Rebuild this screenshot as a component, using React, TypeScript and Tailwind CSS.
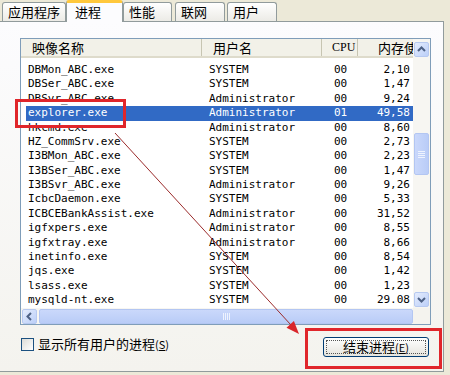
import React from "react";

const rows: [string, string, string, string][] = [
  ["DBMon_ABC.exe", "SYSTEM", "00", "2,10"],
  ["DBSer_ABC.exe", "SYSTEM", "00", "1,47"],
  ["DBSvr_ABC.exe", "Administrator", "00", "9,24"],
  ["explorer.exe", "Administrator", "01", "49,58"],
  ["hkcmd.exe", "Administrator", "00", "8,60"],
  ["HZ_CommSrv.exe", "SYSTEM", "00", "2,73"],
  ["I3BMon_ABC.exe", "SYSTEM", "00", "2,23"],
  ["I3BSer_ABC.exe", "SYSTEM", "00", "1,47"],
  ["I3BSvr_ABC.exe", "Administrator", "00", "9,26"],
  ["IcbcDaemon.exe", "SYSTEM", "00", "5,33"],
  ["ICBCEBankAssist.exe", "Administrator", "00", "31,52"],
  ["igfxpers.exe", "Administrator", "00", "8,55"],
  ["igfxtray.exe", "Administrator", "00", "8,66"],
  ["inetinfo.exe", "SYSTEM", "00", "8,54"],
  ["jqs.exe", "SYSTEM", "00", "1,42"],
  ["lsass.exe", "SYSTEM", "00", "1,23"],
  ["mysqld-nt.exe", "SYSTEM", "00", "29.08"],
];

const cjk = "font-['SimSun','Noto_Sans_CJK_SC',sans-serif]";

function Chevron({ dir }: { dir: "up" | "down" | "left" }) {
  const pts =
    dir === "up" ? "2,7 5.5,3.5 9,7" : dir === "down" ? "2,4 5.5,7.5 9,4" : "7,2 3.5,5.5 7,9";
  return (
    <svg width="11" height="11" viewBox="0 0 11 11">
      <polyline points={pts} fill="none" stroke="#4D6185" strokeWidth="2" />
    </svg>
  );
}

function ArrowBtn({ dir }: { dir: "up" | "down" | "left" }) {
  return (
    <div className="w-[15px] h-[15px] rounded-[2px] border border-[#B7C9F0] bg-gradient-to-br from-[#E4ECFD] to-[#BCCFF8] flex items-center justify-center">
      <Chevron dir={dir} />
    </div>
  );
}

function Tab({ label, w, selected, ml }: { label: string; w: string; selected?: boolean; ml: string }) {
  if (selected) {
    return (
      <div
        className={`${w} ${ml} h-[22px] relative z-10 -mb-px rounded-t-[3px] border border-b-0 border-[#919B9C] border-t-[3px] border-t-[#FFC83C] bg-[#FCFCFE] ${cjk} text-[13px] leading-[17px] pl-[8px] text-black`}
      >
        {label}
      </div>
    );
  }
  return (
    <div
      className={`${w} ${ml} h-[19px] rounded-t-[3px] border border-b-0 border-[#919B9C] bg-gradient-to-b from-white to-[#ECEBE6] ${cjk} text-[13px] leading-[18px] pl-[5px] text-black`}
    >
      {label}
    </div>
  );
}

export default function App() {
  return (
    <div className="w-[450px] h-[375px] bg-[#ECE9D8] relative overflow-hidden">
      {/* tabs */}
      <div className="flex items-end h-[21px]">
        <Tab label="应用程序" w="w-[64px]" ml="ml-[2px]" />
        <Tab label="进程" w="w-[57px]" ml="ml-0" selected />
        <Tab label="性能" w="w-[49px]" ml="ml-0" />
        <Tab label="联网" w="w-[50px]" ml="ml-[3px]" />
        <Tab label="用户" w="w-[50px]" ml="ml-[2px]" />
      </div>
      {/* panel */}
      <div className="w-[444px] h-[351px] border border-l-0 border-[#919B9C] bg-gradient-to-b from-[#FCFCFE] to-[#F4F3EE] pl-[20px] pt-[16px]">
        {/* list */}
        <div className="w-[411px] h-[287px] border border-[#7F9DB9] bg-white flex flex-col">
          <div className="flex h-[269px]">
            <div className="w-[392px] overflow-hidden">
              {/* header */}
              <div className={`flex items-stretch h-[19px] bg-[#F2F1E8] border-b-2 border-[#DEDBCB] text-[13px] leading-[17px] text-black ${cjk}`}>
                <div className="w-[181px] pl-[11px] border-r border-[#C7C5B2] whitespace-nowrap">映像名称</div>
                <div className="w-[120px] pl-[11px] border-r border-[#C7C5B2] whitespace-nowrap">用户名</div>
                <div className="w-[36px] pl-[10px] border-r border-[#C7C5B2] font-['Liberation_Serif',serif] text-[12px] whitespace-nowrap">CPU</div>
                <div className="w-[55px] pl-[20px] whitespace-nowrap overflow-hidden">内存使用</div>
              </div>
              <div className="pt-[5px] font-['DejaVu_Sans_Mono',monospace] text-[11px] text-black">
                {rows.map((r, i) => {
                  const sel = i === 3;
                  return (
                    <div key={i} className="pl-[5px]">
                      <div
                        className={`flex h-[14.4px] items-center whitespace-nowrap ${sel ? "bg-[#316AC5] text-white" : ""}`}
                      >
                        <div className="w-[176px] pl-[2px]">{r[0]}</div>
                        <div className="w-[120px] pl-[7px]">{r[1]}</div>
                        <div className="w-[36px] pl-[12px]">{r[2]}</div>
                        <div className="w-[55px] text-right pr-[3px]">{r[3]}</div>
                      </div>
                    </div>
                  );
                })}
              </div>
            </div>
            {/* vertical scrollbar */}
            <div className="w-[17px] bg-[#F7F6F2] flex flex-col items-center pt-[3px] pb-[1px]">
              <ArrowBtn dir="up" />
              <div className="mt-[76px] w-[15px] h-[42px] rounded-[2px] border border-[#B3C6F2] bg-gradient-to-r from-[#CAD8FB] to-[#B9CCF7] flex flex-col items-center justify-center gap-[1px]">
                <div className="w-[7px] h-px bg-[#EEF3FE]" />
                <div className="w-[7px] h-px bg-[#EEF3FE]" />
                <div className="w-[7px] h-px bg-[#EEF3FE]" />
                <div className="w-[7px] h-px bg-[#EEF3FE]" />
              </div>
              <div className="flex-1" />
              <ArrowBtn dir="down" />
            </div>
          </div>
          {/* horizontal scrollbar */}
          <div className="flex h-[16px]">
            <div className="w-[392px] bg-[#F7F6F2] flex items-center pl-px">
              <ArrowBtn dir="left" />
              <div className="ml-[2px] flex-1 h-[15px] rounded-[2px] border border-[#B3C6F2] bg-gradient-to-b from-[#CAD8FB] to-[#B9CCF7] flex items-center justify-center gap-[1px]">
                <div className="w-px h-[7px] bg-[#EEF3FE]" />
                <div className="w-px h-[7px] bg-[#EEF3FE]" />
                <div className="w-px h-[7px] bg-[#EEF3FE]" />
                <div className="w-px h-[7px] bg-[#EEF3FE]" />
              </div>
            </div>
            <div className="w-[17px] bg-[#F4F3EE]" />
          </div>
        </div>
        {/* bottom row */}
        <div className="w-[410px] flex justify-between items-start">
          <div className="mt-[11px] ml-px flex items-center">
            <div className="w-[13px] h-[13px] border border-[#1C5180] bg-gradient-to-br from-[#DCDCD7] to-white" />
            <span className={`ml-[4px] text-[13px] leading-[15px] text-black ${cjk}`}>
              显示所有用户的进程<span className="text-[11px]">(<u>S</u>)</span>
            </span>
          </div>
          <div className="mt-[12px] mr-px w-[106px] h-[20px] rounded-[3px] border border-[#003C74] bg-gradient-to-b from-white to-[#E6E5DE] p-[2px]">
            <div className={`w-full h-full border border-dotted border-[#555] flex items-center justify-center text-[13px] text-black ${cjk}`}>
              结束进程<span className="text-[11px]">(<u>E</u>)</span>
            </div>
          </div>
        </div>
      </div>

      {/* annotations */}
      <div className="absolute left-[15px] top-[99px] w-[111px] h-[29px] border-[3px] border-[#E0262B]" />
      <div className="absolute left-[305px] top-[328px] w-[137px] h-[41px] border-[3px] border-[#E0262B]" />
      <svg className="absolute left-0 top-0 pointer-events-none" width="450" height="375">
        <line x1="115" y1="133" x2="291" y2="325" stroke="#9B2B2B" strokeWidth="1" />
        <polygon points="299,334 293.9,321 286.5,327.8" fill="#D9262B" />
      </svg>
    </div>
  );
}
